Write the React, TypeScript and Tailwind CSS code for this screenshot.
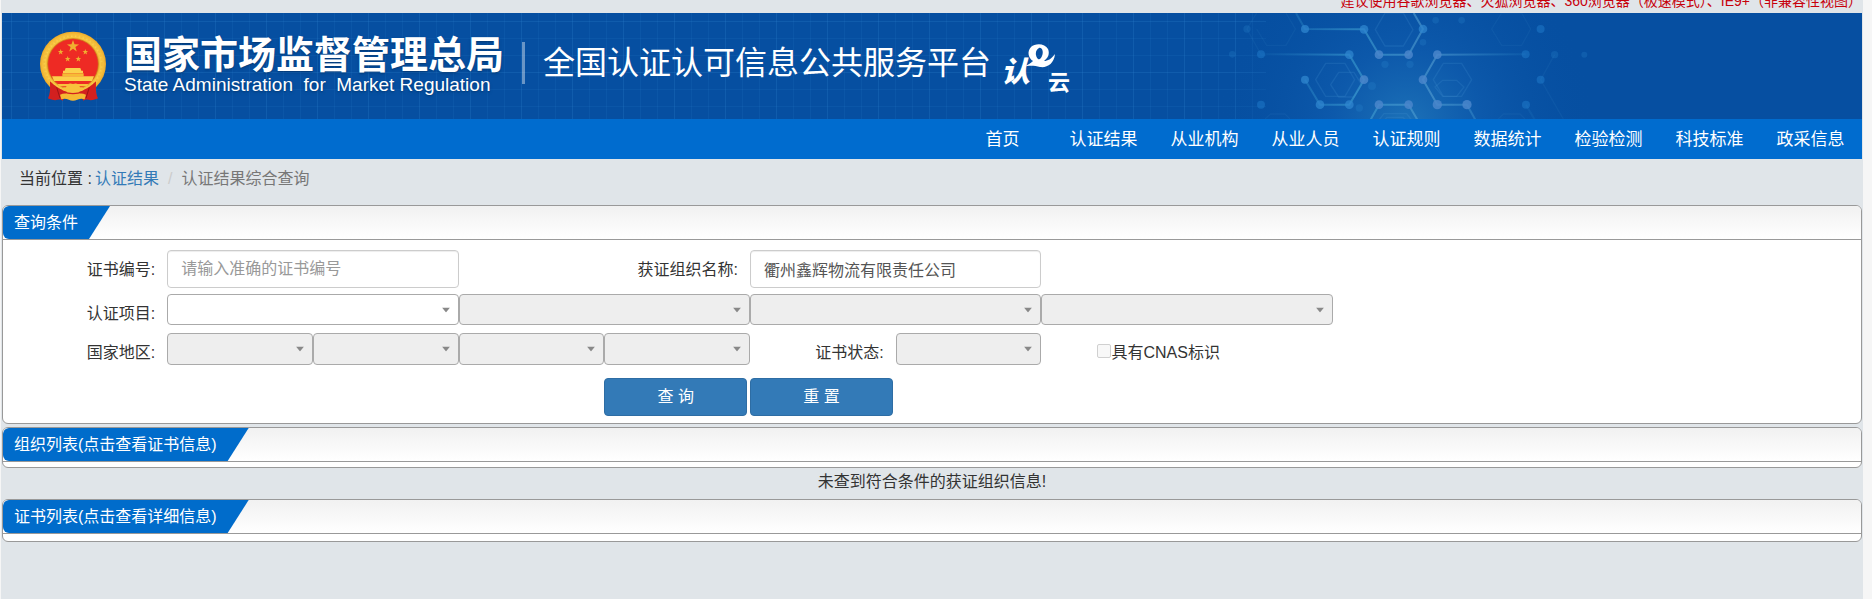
import React from "react";

const NAV_ITEMS = ["首页", "认证结果", "从业机构", "从业人员", "认证规则", "数据统计", "检验检测", "科技标准", "政采信息"];

function HeaderBackdrop() {
    return (
        <svg className="absolute inset-0 h-full w-full" aria-hidden="true">
            <defs>
                <pattern id="grid" x="9" y="8" width="17" height="17" patternUnits="userSpaceOnUse">
                    <path d="M0.5 0V17M0 0.5H17" stroke="#2f83cf" strokeOpacity="0.13" fill="none" />
                </pattern>
                <pattern id="gridWide" x="9" y="8" width="51" height="51" patternUnits="userSpaceOnUse">
                    <path d="M0.5 0V51M0 0.5H51" stroke="#2f83cf" strokeOpacity="0.12" fill="none" />
                </pattern>
                <radialGradient id="glow" gradientUnits="userSpaceOnUse" cx="1405" cy="112" r="190">
                    <stop offset="0" stopColor="#1d72b8" />
                    <stop offset="0.4" stopColor="#0f5cae" stopOpacity="0.75" />
                    <stop offset="1" stopColor="#064fa1" stopOpacity="0" />
                </radialGradient>
                <linearGradient id="lineFade" gradientUnits="userSpaceOnUse" x1="150" y1="0" x2="950" y2="0">
                    <stop offset="0" stopColor="#3aa0d8" stopOpacity="0.05" />
                    <stop offset="0.35" stopColor="#3fa3d4" stopOpacity="0.55" />
                    <stop offset="0.65" stopColor="#5aa3d4" stopOpacity="0.55" />
                    <stop offset="1" stopColor="#3aa0d8" stopOpacity="0.1" />
                </linearGradient>
            </defs>
            <rect width="1264" height="100%" fill="url(#grid)" />
            <rect width="1264" height="100%" fill="url(#gridWide)" />
            <rect x="1150" width="450" height="100%" fill="url(#glow)" />
            <g transform="translate(1208 0) scale(0.3333)">
                {/* faint inner hexagons */}
                <g fill="none" stroke="#4b9bd6" strokeOpacity="0.18" strokeWidth="4">
                    <path d="M317 200L347 151H405L434 200L405 250H347Z" />
                    <path d="M670 200L700 151H755L785 200L755 250H700Z" />
                    <path d="M496 50L525 0H580L609 50L580 99H525Z" />
                    <path d="M362 215L386 178H432L455 215L432 252H386Z" />
                    <path d="M675 222L698 202H740L762 222L740 250H698Z" />
                    <path d="M500 330L522 302H590L612 330" />
                    <path d="M515 340L530 313H580L597 340" />
                </g>
                <g fill="none" stroke="#4b9bd6" strokeOpacity="0.09" strokeWidth="4">
                    <path d="M845 48L875 0H935L962 48L935 97H875Z" />
                    <path d="M140 48L170 97H228L256 48L228 0" />
                    <path d="M165 318L182 303H225L240 318" />
                    <path d="M865 318L880 303H930L945 318" />
                    <path d="M1034 125L992 200L1060 318" />
                    <path d="M140 0L111 48L153 125" />
                </g>
                {/* bonds */}
                <g fill="none" stroke="url(#lineFade)" strokeWidth="6">
                    <path d="M258 0L285 48L462 49L507 125H596L639 48L611 0" />
                    <path d="M153 124L418 125L462 200L418 275H330L285 200" />
                    <path d="M947 124L682 125L639 200L682 275H771L796 320" />
                    <path d="M482 320L507 275H596L622 320" />
                    <path d="M948 275L974 320" />
                </g>
                {/* atoms */}
                <g fill="#2f86cf" fillOpacity="0.75">
                    <circle cx="285" cy="48" r="12" />
                    <circle cx="462" cy="49" r="13" />
                    <circle cx="639" cy="48" r="13" />
                    <circle cx="418" cy="125" r="13" />
                    <circle cx="285" cy="200" r="12" />
                    <circle cx="330" cy="275" r="13" />
                    <circle cx="418" cy="275" r="13" />
                </g>
                <g fill="#4a86cb" fillOpacity="0.85">
                    <circle cx="507" cy="125" r="13" />
                    <circle cx="596" cy="125" r="13" />
                    <circle cx="682" cy="125" r="13" />
                    <circle cx="462" cy="200" r="13" />
                    <circle cx="639" cy="200" r="13" />
                    <circle cx="507" cy="275" r="13" />
                    <circle cx="596" cy="275" r="13" />
                    <circle cx="682" cy="275" r="14" />
                    <circle cx="771" cy="275" r="14" />
                </g>
                <g fill="#1f7bcb" fillOpacity="0.5">
                    <circle cx="153" cy="124" r="12" />
                    <circle cx="153" cy="275" r="12" />
                    <circle cx="947" cy="124" r="12" />
                    <circle cx="948" cy="275" r="12" />
                    <circle cx="992" cy="200" r="12" />
                    <circle cx="992" cy="48" r="12" />
                </g>
                <g fill="#2a86d0" fillOpacity="0.25">
                    <circle cx="111" cy="48" r="11" />
                    <circle cx="67" cy="124" r="10" />
                    <circle cx="525" cy="154" r="11" />
                    <circle cx="600" cy="154" r="11" />
                    <circle cx="486" cy="219" r="12" />
                    <circle cx="448" cy="285" r="11" />
                    <circle cx="639" cy="88" r="10" />
                    <circle cx="677" cy="22" r="10" />
                    <circle cx="755" cy="22" r="10" />
                    <circle cx="1034" cy="125" r="11" />
                    <circle cx="1123" cy="125" r="9" />
                </g>
            </g>
        </svg>
    );
}

function Star({ x, y, r }: { x: number; y: number; r: number }) {
    return (
        <path
            transform={`translate(${x} ${y}) scale(${r})`}
            d="M0 -1L0.235 -0.324L0.951 -0.309L0.38 0.124L0.588 0.809L0 0.4L-0.588 0.809L-0.38 0.124L-0.951 -0.309L-0.235 -0.324Z"
            fill="#f0b030"
        />
    );
}

function Emblem() {
    return (
        <svg viewBox="24 28 210 216" className="h-[72px] w-[70px] shrink-0" role="img" aria-label="国徽">
            <defs>
                <radialGradient id="gold" cx="0.5" cy="0.5" r="0.5">
                    <stop offset="0.74" stopColor="#e39a1d" />
                    <stop offset="0.85" stopColor="#fbd04b" />
                    <stop offset="1" stopColor="#eda828" />
                </radialGradient>
            </defs>
            <ellipse cx="129" cy="130" rx="99" ry="97" fill="url(#gold)" />
            <ellipse cx="129" cy="130" rx="88" ry="86" fill="none" stroke="#f4bd3c" strokeWidth="9" strokeDasharray="7 5" />
            <circle cx="129" cy="130" r="76" fill="#ee2a24" stroke="#c9831a" strokeWidth="2" />
            <Star x={129} y={77} r={19} />
            <Star x={92} y={94} r={9} />
            <Star x={166} y={94} r={9} />
            <Star x={113} y={115} r={9} />
            <Star x={145} y={115} r={9} />
            {/* gate tower */}
            <path d="M107 142H151L154 150H159V158H99V150H104Z" fill="#fbd04b" />
            <path d="M97 158H161V167H97Z" fill="#f6bb35" />
            <path d="M66 167H192L186 181H72Z" fill="#fbd04b" />
            <path d="M82 190H176L170 197H88Z" fill="#f8c23c" />
            {/* ribbon */}
            <path d="M60 182C75 198 92 208 112 212L98 240C90 234 82 238 76 239C68 238 60 236 54 233C62 218 60 200 60 182Z" fill="#d3201f" />
            <path d="M198 182C183 198 166 208 146 212L160 240C168 234 176 238 182 239C190 238 198 236 204 233C196 218 198 200 198 182Z" fill="#d3201f" />
            <path d="M80 200L90 232M178 200L168 232" stroke="#9c1414" strokeWidth="3" />
            <path d="M108 200C112 186 122 188 129 190C136 188 146 186 150 200C160 198 164 204 160 209C146 218 112 218 98 209C94 204 98 198 108 200Z" fill="#f8c23c" />
            <path d="M90 222C104 216 116 220 129 222C142 220 154 216 168 222L164 236C150 230 140 240 129 240C118 240 108 230 94 236Z" fill="#f6b832" />
            <path d="M98 212Q129 226 160 212" stroke="#d3201f" strokeWidth="4" fill="none" />
        </svg>
    );
}

function CloudLogo() {
    return (
        <svg viewBox="0 0 72 48" className="h-12 w-[72px] shrink-0 overflow-visible" role="img" aria-label="认e云" fill="#fff">
            <text x="0" y="38" fontSize="29" fontWeight="900" className="font-['Noto_Sans_CJK_SC',sans-serif] italic">认</text>
            <path
                fillRule="evenodd"
                d="M22 23C27 21 30 19 32 17C27 14 26 7 30 3C34 -1 44 -1 47 5C49 10 47 14 43 17C47 17 50 15 54 10C53 20 46 24 39 23C34 22 29 21 22 23ZM37 15C34 12 34 6 38 4C41 3 43 8 41 12C40 14 39 16 37 15Z"
            />
            <text x="47" y="46" fontSize="22" fontWeight="700" className="font-['Noto_Sans_CJK_SC',sans-serif]">云</text>
        </svg>
    );
}

function Panel({ title, children }: { title: string; children?: React.ReactNode }) {
    return (
        <section className="overflow-hidden rounded-md border border-[#999] bg-white">
            <div className="flex border-b border-[#999] bg-linear-to-b from-[#f1f1f1] to-white">
                <h2 className="rounded-l-md bg-[#006ccb] py-1 pr-8 pl-[11px] leading-[25px] text-white [clip-path:polygon(0_0,100%_0,calc(100%_-_21px)_100%,0_100%)]">
                    {title}
                </h2>
            </div>
            {children}
        </section>
    );
}

function FieldLabel({ htmlFor, wide = false, children }: { htmlFor: string; wide?: boolean; children: React.ReactNode }) {
    return (
        <label htmlFor={htmlFor} className={`pt-2 pr-3 text-right leading-6 ${wide ? "col-span-2" : ""}`}>
            {children}
        </label>
    );
}

function SelectBox({ id, label, wide = false, tall = false, disabled = true }: { id: string; label?: string; wide?: boolean; tall?: boolean; disabled?: boolean }) {
    return (
        <div className={`relative ${wide ? "col-span-2" : ""}`}>
            <select
                id={id}
                aria-label={label}
                disabled={disabled}
                className={`block w-full appearance-none rounded border border-[#aaa] px-2 ${tall ? "h-8" : "h-[31px]"} ${disabled ? "bg-[#eee]" : "bg-white"}`}
            />
            <svg viewBox="0 0 8 5" className="pointer-events-none absolute top-1/2 right-[9px] h-[5px] w-2 -translate-y-1/2" aria-hidden="true">
                <path d="M0 0H8L4 5Z" fill="#888" />
            </svg>
        </div>
    );
}

const inputClass =
    "col-span-2 h-[38px] w-full rounded border border-[#ccc] bg-white px-[13px] text-[#555] shadow-[inset_0_1px_1px_rgba(0,0,0,0.075)] placeholder:text-[#999]";
const buttonClass = "mr-[3px] h-[38px] rounded border border-[#2e6da4] bg-[#337ab7] text-white";

function SearchForm() {
    return (
        <form className="ml-[1%] w-[94.1%] pt-[10px] pb-[7px]" onSubmit={(e) => e.preventDefault()}>
            <div className="mb-[6px] grid h-[38px] grid-cols-12 items-start">
                <FieldLabel htmlFor="certNo">证书编号:</FieldLabel>
                <input id="certNo" type="text" placeholder="请输入准确的证书编号" className={inputClass} />
                <FieldLabel htmlFor="orgName" wide>获证组织名称:</FieldLabel>
                <input id="orgName" type="text" defaultValue="衢州鑫辉物流有限责任公司" className={inputClass} />
            </div>

            <div className="mb-[7px] grid grid-cols-12 items-start">
                <FieldLabel htmlFor="project1">认证项目:</FieldLabel>
                <SelectBox id="project1" wide disabled={false} />
                <SelectBox id="project2" label="认证项目二级" wide />
                <SelectBox id="project3" label="认证项目三级" wide />
                <SelectBox id="project4" label="认证项目四级" wide />
            </div>

            <div className="mb-[13px] grid grid-cols-12 items-start">
                <FieldLabel htmlFor="country">国家地区:</FieldLabel>
                <SelectBox id="country" tall />
                <SelectBox id="province" label="省" tall />
                <SelectBox id="city" label="市" tall />
                <SelectBox id="district" label="区" tall />
                <FieldLabel htmlFor="status">证书状态:</FieldLabel>
                <SelectBox id="status" tall />
                <div className="col-span-2 flex items-start pt-2 pl-14">
                    <input
                        id="cnas"
                        type="checkbox"
                        disabled
                        className="mt-[3px] size-[14px] appearance-none rounded-xs border border-[#d0d0d0] bg-[#f8f8f8]"
                    />
                    <label htmlFor="cnas" className="leading-6">具有CNAS标识</label>
                </div>
            </div>

            <div className="grid grid-cols-12">
                <button type="submit" className={`col-start-5 ${buttonClass}`}>查 询</button>
                <button type="reset" className={buttonClass}>重 置</button>
            </div>
        </form>
    );
}

export default function App() {
    return (
        <div className="min-h-screen bg-[#f6f6f6] pr-[9px] pl-px font-['Liberation_Sans','Noto_Sans_CJK_SC',sans-serif] text-base text-[#333]">
            <div className="min-h-screen bg-[#e0e5e9] px-px">
                <div className="flex h-[13px] items-end justify-end overflow-hidden pb-1 text-sm leading-4 whitespace-nowrap text-[#c7000b]">
                    建议使用谷歌浏览器、火狐浏览器、360浏览器（极速模式）、IE9+（非兼容性视图）
                </div>

                <header className="relative flex h-[106px] items-center overflow-hidden bg-[#064fa1] pl-9 text-white">
                    <HeaderBackdrop />
                    <div className="relative flex items-center">
                        <Emblem />
                        <div className="ml-4 pb-[2px] whitespace-pre text-shadow-md">
                            <h1 className="text-[38px] leading-10 font-bold">国家市场监督管理总局</h1>
                            <p className="text-[19px] leading-5">State Administration  for  Market Regulation</p>
                        </div>
                        <div className="ml-[18px] flex items-center pb-[6px] whitespace-nowrap">
                            <div className="h-[42px] w-[3px] bg-white/40" />
                            <p className="ml-[18px] text-[32px] leading-10">全国认证认可信息公共服务平台</p>
                            <div className="ml-[10px] pt-[10px]">
                                <CloudLogo />
                            </div>
                        </div>
                    </div>
                </header>

                <nav className="flex h-10 items-end justify-end bg-[#006ccf] pr-px text-[17px] text-white">
                    {NAV_ITEMS.map((item) => (
                        <a key={item} href="#" className="w-[101px] text-center leading-[38px]">
                            {item}
                        </a>
                    ))}
                </nav>

                <div className="flex pt-2 pb-[14px] pl-[17px] leading-6">
                    <span className="mr-[3px]">当前位置 :</span>
                    <a href="#" className="text-[#337ab7]">认证结果</a>
                    <span className="px-[9px] text-[#ccc]">/</span>
                    <span className="text-[#777]">认证结果综合查询</span>
                </div>

                <main>
                    <Panel title="查询条件">
                        <SearchForm />
                    </Panel>
                    <div className="mt-[3px]">
                        <Panel title="组织列表(点击查看证书信息)">
                            <div className="h-[5px]" />
                        </Panel>
                    </div>
                    <p className="pb-[3px] text-center leading-7">未查到符合条件的获证组织信息!</p>
                    <Panel title="证书列表(点击查看详细信息)">
                        <div className="h-[7px]" />
                    </Panel>
                </main>
            </div>
        </div>
    );
}
